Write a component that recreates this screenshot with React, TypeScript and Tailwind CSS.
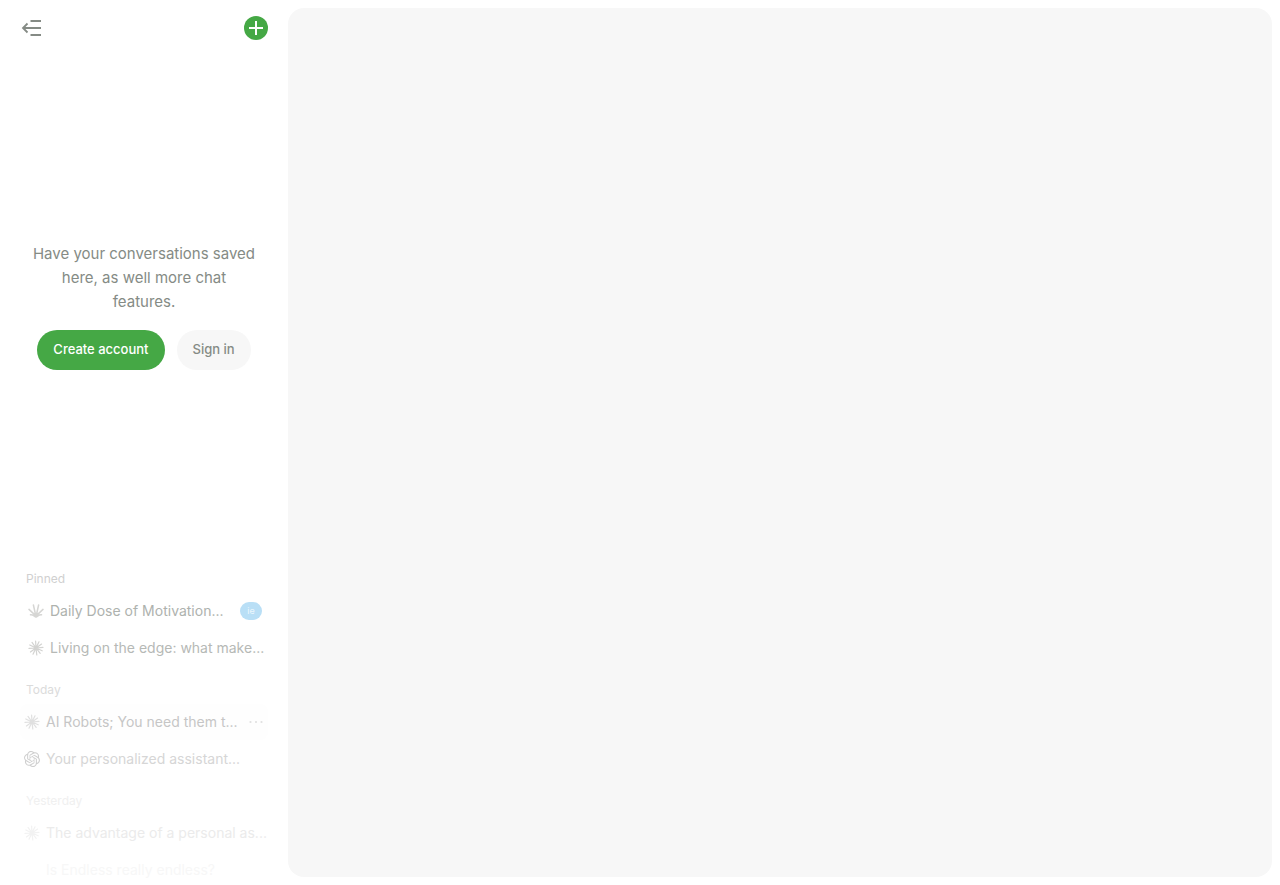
import React from "react";
import { SiOpenai } from "react-icons/si";

type IconProps = { className?: string };

function BurstIcon({ className }: IconProps) {
  return (
    <svg viewBox="0 0 16 16" className={className} fill="none" stroke="currentColor" strokeWidth="1.2" strokeLinecap="round" aria-hidden="true">
      <path d="M8 8 7.6 1M8 8l3-6.2M8 8l5.6-3.9M8 8l7-.6M8 8l6.2 2.8M8 8l4.2 5.4M8 8l.8 7M8 8l-3 6.2M8 8l-5.6 4M8 8l-7 .4M8 8 1.8 5M8 8 4 2.4" />
    </svg>
  );
}

function FanIcon({ className }: IconProps) {
  return (
    <svg viewBox="0 0 16 16" className={className} fill="none" stroke="currentColor" strokeWidth="1.5" strokeLinecap="round" strokeLinejoin="round" aria-hidden="true">
      <path d="M7.400 11 5.400 2M8.600 11l2-9M6.600 11.600 1 6.400M9.400 11.600 15 6.400M2.500 11.800C4.800 11.400 6.400 13.400 8 14c1.600-.6 3.200-2.600 5.500-2.200M7 12.400h2" />
    </svg>
  );
}

function OpenAiIcon({ className }: IconProps) {
  return <SiOpenai className={className} aria-hidden="true" />;
}

type Chat = {
  title: string;
  Icon?: React.ComponentType<IconProps>;
  row: string;
  icon: string;
  badge?: boolean;
  menu?: boolean;
};

const groups: { label: string; tone: string; chats: Chat[] }[] = [
  {
    label: "Pinned",
    tone: "text-[#d0d0d0]",
    chats: [
      { title: "Daily Dose of Motivation...", Icon: FanIcon, row: "pl-2 text-[#aeb2ae]", icon: "text-[#d6d6d4]", badge: true },
      { title: "Living on the edge: what make...", Icon: BurstIcon, row: "pl-2 text-[#b6b9b6]", icon: "text-[#d3d3d1]" },
    ],
  },
  {
    label: "Today",
    tone: "text-[#dbdbdb]",
    chats: [
      { title: "AI Robots; You need them t...", Icon: BurstIcon, row: "pl-1 bg-[#fefefe] text-[#c6c6c6]", icon: "text-[#e0e0e0]", menu: true },
      { title: "Your personalized assistant...", Icon: OpenAiIcon, row: "pl-1 text-[#d6d6d6]", icon: "text-[#cfcfcf]" },
    ],
  },
  {
    label: "Yesterday",
    tone: "text-[#f0f0f0]",
    chats: [
      { title: "The advantage of a personal as...", Icon: BurstIcon, row: "pl-1 text-[#ebebeb]", icon: "text-[#f2f2f2]" },
      { title: "Is Endless really endless?", row: "pl-1 text-[#f7f7f7]", icon: "" },
    ],
  },
];

function ChatRow({ title, Icon, row, icon, badge, menu }: Chat) {
  return (
    <li className={`flex h-9 items-center rounded-lg ${row}`}>
      <a href="#" className="flex min-w-0 flex-1 items-center gap-1.5 text-sm whitespace-nowrap">
        <span className={`size-4 shrink-0 ${icon}`}>{Icon && <Icon className="size-4" />}</span>
        {title}
      </a>
      {badge && (
        <span className="mr-1.5 flex h-[18px] w-[22px] items-center justify-center rounded-full bg-[#b9dff6] text-[9px] text-[#edf7fd]">
          ie
        </span>
      )}
      {menu && (
        <button type="button" aria-label="More options" className="mr-1 text-[#e0e0e0]">
          <svg viewBox="0 0 16 16" className="size-4" fill="currentColor" aria-hidden="true">
            <circle cx="2.500" cy="8" r="1.100" />
            <circle cx="8" cy="8" r="1.100" />
            <circle cx="13.500" cy="8" r="1.100" />
          </svg>
        </button>
      )}
    </li>
  );
}

export default function App() {
  return (
    <div className="flex h-screen overflow-hidden bg-white font-['Inter','Liberation_Sans',sans-serif]">
      <aside className="flex w-72 shrink-0 flex-col">
        <header className="flex h-14 shrink-0 items-center justify-between px-5">
          <button type="button" aria-label="Collapse sidebar" className="text-[#858b85]">
            <svg viewBox="0 0 24 24" className="size-6" fill="none" stroke="currentColor" strokeWidth="1.800" aria-hidden="true">
              <path d="M10.500 5H21M3 12h18M10.500 19H21M7.500 7.500 3 12l4.500 4.500" />
            </svg>
          </button>
          <button type="button" aria-label="New chat" className="rounded-full bg-[#45a845] text-white">
            <svg viewBox="0 0 24 24" className="size-6" fill="none" stroke="currentColor" strokeWidth="2" aria-hidden="true">
              <path d="M12 5v14M5 12h14" />
            </svg>
          </button>
        </header>

        <section className="flex flex-1 flex-col items-center justify-center gap-4 px-8 pb-2.5">
          <p className="text-center text-[15px] leading-6 text-[#858b85]">
            Have your conversations saved here, as well more chat features.
          </p>
          <div className="flex gap-3 text-[13px]">
            <button type="button" className="h-10 rounded-full bg-[#45a845] px-4 font-medium text-white">
              Create account
            </button>
            <button type="button" className="h-10 rounded-full bg-[#f7f7f7] px-4 font-medium text-[#858b85]">
              Sign in
            </button>
          </div>
        </section>

        <nav aria-label="Conversations" className="flex h-80 shrink-0 flex-col gap-2.5 overflow-hidden px-5">
          {groups.map(({ label, tone, chats }) => (
            <div key={label} className="shrink-0">
              <h2 className={`px-1.5 text-xs leading-7 ${tone}`}>{label}</h2>
              <ul className="flex flex-col gap-px">
                {chats.map((chat) => (
                  <ChatRow key={chat.title} {...chat} />
                ))}
              </ul>
            </div>
          ))}
        </nav>
      </aside>
      <main className="my-2 mr-2 flex-1 rounded-2xl bg-[#f7f7f7]" />
    </div>
  );
}
